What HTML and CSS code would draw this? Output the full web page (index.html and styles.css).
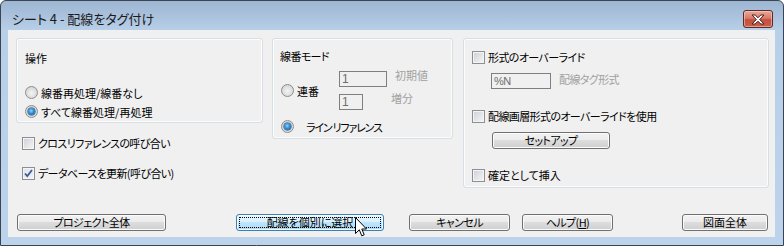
FILE: index.html
```html
<!DOCTYPE html>
<html lang="ja">
<head>
<meta charset="utf-8">
<title>シート 4 - 配線をタグ付け</title>
<link rel="stylesheet" href="styles.css">
</head>
<body>
<div class="window">
  <div class="titlebar">
    <span class="title">シート 4 - 配線をタグ付け</span>
    <div class="close">
      <svg width="16" height="11" viewBox="0 0 16 11"><path d="M2 1h3.2L8 3.8 10.8 1H14l-4.3 4.5L14 10h-3.2L8 7.2 5.2 10H2l4.3-4.5z" fill="#fff" stroke="#4a2420" stroke-width="1" stroke-linejoin="round"/></svg>
    </div>
  </div>
  <div class="client">
    <div class="panels">
      <div class="col-left">
        <div class="group g-op">
          <div class="glabel">操作</div>
          <div class="opt op-first"><span class="rb"></span><span>線番再処理/線番なし</span></div>
          <div class="opt"><span class="rb on"></span><span>すべて線番処理/再処理</span></div>
        </div>
        <div class="chk c-xref"><span class="cb"></span><span class="kana">クロスリファレンスの呼び合い</span></div>
        <div class="chk c-db"><span class="cb on"><svg width="9" height="9" viewBox="0 0 9 9"><path d="M1 4.5l2.3 2.6L8 1" fill="none" stroke="#3c5a9a" stroke-width="1.8"/></svg></span><span class="kana">データベースを更新(呼び合い)</span></div>
      </div>
      <div class="group g-mode">
        <div class="glabel kana">線番モード</div>
        <div class="seq">
          <div class="opt seq-opt"><span class="rb"></span><span>連番</span></div>
          <div class="seq-fields">
            <div class="field-row"><span class="tb tb-start">1</span><span class="dis lbl-start">初期値</span></div>
            <div class="field-row row2"><span class="tb tb-inc">1</span><span class="dis lbl-inc">増分</span></div>
          </div>
        </div>
        <div class="opt line-opt"><span class="rb on"></span><span class="line-text kana">ライン リファレンス</span></div>
      </div>
      <div class="group g-right">
        <div class="chk r1"><span class="cb"></span><span class="kana">形式のオーバーライド</span></div>
        <div class="field-row fmt"><span class="tb tb-fmt">%N</span><span class="dis lbl-fmt kana">配線タグ形式</span></div>
        <div class="chk r2"><span class="cb"></span><span class="kana">配線画層形式のオーバーライドを使用</span></div>
        <div class="btn setup kana">セットアップ</div>
        <div class="chk r3"><span class="cb"></span><span>確定として挿入</span></div>
      </div>
    </div>
    <div class="buttons">
      <div class="btn b1 kana">プロジェクト全体</div>
      <div class="btn b2 focus"><span class="focus-rect">配線を個別に選択</span>
        <svg class="cursor" width="13" height="20" viewBox="0 0 13 20"><path d="M0.5 0.5V16.5L4.3 12.8L6.8 18.8L9.2 17.8L6.8 12H11.5Z" fill="#fff" stroke="#000" stroke-width="1" stroke-linejoin="miter"/></svg>
      </div>
      <div class="btn b3 kana">キャンセル</div>
      <div class="btn b4 kana">ヘルプ(<u>H</u>)</div>
      <div class="btn b5">図面全体</div>
    </div>
  </div>
</div>
</body>
</html>
```
FILE: styles.css
```css
html, body {
  margin: 0;
  padding: 0;
  background: #ffffff;
}
body {
  font-family: "Noto Sans CJK JP", "DejaVu Sans", sans-serif;
  font-size: 11px;
  color: #000;
  font-feature-settings: "palt";
}
.kana {
  letter-spacing: -0.6px;
}
.window {
  box-sizing: border-box;
  width: 784px;
  height: 246px;
  border: 1px solid #3b4450;
  border-radius: 6px 6px 0 0;
  background: linear-gradient(to bottom, #9db6d2 0px, #a9c1dc 14px, #b8cfe8 29px, #bcd3eb 100%);
  display: flex;
  flex-direction: column;
  overflow: hidden;
}
.titlebar {
  height: 29px;
  display: flex;
  align-items: flex-start;
  flex: none;
}
.title {
  margin: 8px 0 0 11px;
  font-size: 13px;
  line-height: 20px;
  color: #1b1b1b;
}
.close {
  margin: 9px 10px 0 auto;
  box-sizing: border-box;
  width: 30px;
  height: 18px;
  border: 1px solid #5d2a26;
  border-radius: 3px;
  background: linear-gradient(to bottom, #e9a99c 0%, #d97a6a 45%, #c4503d 55%, #c8604c 100%);
  box-shadow: inset 0 0 0 1px rgba(255,220,210,0.5);
  display: flex;
  align-items: center;
  justify-content: center;
}
.client {
  margin-left: 7px;
  width: 767px;
  height: 207px;
  box-sizing: border-box;
  background: #f0f0f0;
  padding: 8px 0 0 8px;
  display: flex;
  flex-direction: column;
}
.panels {
  display: flex;
  align-items: flex-start;
  height: 150px;
}
.group {
  box-sizing: border-box;
  border: 1px solid #d5dfe5;
  border-radius: 3px;
  box-shadow: inset 0 0 0 1px #fcfcfc;
}
.col-left {
  width: 247px;
  display: flex;
  flex-direction: column;
}
.g-op {
  height: 85px;
  padding: 11px 0 0 8px;
}
.glabel {
  height: 16px;
  line-height: 16px;
}
.opt {
  display: flex;
  align-items: center;
  height: 19px;
}
.op-first {
  margin-top: 17px;
}
.rb {
  box-sizing: border-box;
  width: 13px;
  height: 13px;
  border-radius: 50%;
  border: 1px solid #8b8d8f;
  background: radial-gradient(circle at 50% 55%, #f4f4f4 0%, #dcdcdc 60%, #c8c8c8 100%);
  margin-right: 3px;
  flex: none;
  display: flex;
  align-items: center;
  justify-content: center;
}
.rb.on::after {
  content: "";
  width: 7px;
  height: 7px;
  border-radius: 50%;
  background: radial-gradient(circle at 45% 40%, #8fd6ff 0%, #2f8ed6 45%, #0d4c8e 100%);
  box-shadow: 0 0 0 0.5px #10365e;
}
.chk {
  display: flex;
  align-items: center;
  height: 20px;
}
.col-left .chk {
  padding-left: 6px;
  margin-top: 10px;
}
.cb {
  box-sizing: border-box;
  width: 13px;
  height: 13px;
  border: 1px solid #8e8f8f;
  background: linear-gradient(135deg, #cbcfd5 0%, #e6e7ea 60%, #f6f6f6 100%);
  box-shadow: inset 0 0 0 1px #f4f4f4;
  margin-right: 3px;
  flex: none;
  display: flex;
  align-items: center;
  justify-content: center;
}
.cb.on {
  background: linear-gradient(135deg, #dfe3ea 0%, #f2f3f5 100%);
}
.g-mode {
  width: 181px;
  height: 101px;
  margin-left: 9px;
  padding: 9px 0 0 8px;
}
.g-mode .glabel {
  margin-left: -1px;
}
.seq {
  display: flex;
  align-items: center;
  margin-top: 7px;
}
.seq-opt {
  width: 58px;
  flex: none;
}
.seq-fields {
  display: flex;
  flex-direction: column;
}
.field-row {
  display: flex;
  align-items: flex-start;
}
.row2 {
  margin-top: 7px;
}
.tb {
  box-sizing: border-box;
  height: 16px;
  border: 1px solid #7f7f7f;
  background: #f0f0f0;
  color: #6d6d6d;
  font-family: "Liberation Sans", Arial, sans-serif;
  font-size: 12px;
  line-height: 14px;
  padding-left: 2px;
  flex: none;
}
.tb-start { width: 48px; }
.tb-inc { width: 24px; }
.tb-fmt { width: 60px; font-size: 11px; letter-spacing: -0.5px; }
.dis {
  color: #a0a0a0;
  line-height: 14px;
  margin-top: -3px;
}
.lbl-start { margin-left: 8px; }
.lbl-inc { margin-left: 28px; }
.lbl-fmt { margin-left: 8px; margin-top: -1px; }
.line-opt {
  margin-top: 7px;
}
.line-text {
  margin-left: 9px;
  letter-spacing: -1.2px;
}
.g-right {
  width: 306px;
  height: 150px;
  margin-left: 10px;
  padding: 8px 0 0 8px;
}
.fmt {
  margin: 6px 0 0 19px;
}
.r2 { margin-top: 17px; }
.r3 { margin-top: 16px; }
.btn {
  box-sizing: border-box;
  height: 17px;
  border: 1px solid #707070;
  border-radius: 3px;
  background: linear-gradient(to bottom, #f2f2f2 0%, #ebebeb 50%, #dddddd 50%, #cfcfcf 100%);
  box-shadow: inset 0 0 0 1px #fbfbfb;
  display: flex;
  align-items: center;
  justify-content: center;
  line-height: 15px;
  flex: none;
}
.setup {
  width: 118px;
  margin: 6px 0 0 20px;
}
.buttons {
  display: flex;
  margin-top: 26px;
}
.b1 { width: 149px; margin-left: 1px; }
.b2 { width: 148px; margin-left: 70px; }
.b3 { width: 101px; margin-left: 25px; }
.b4 { width: 91px; margin-left: 12px; }
.b5 { width: 86px; margin-left: 69px; }
.focus {
  position: relative;
  border-color: #3c7fb1;
  background: linear-gradient(to bottom, #eaf6fd 0%, #d9f0fc 50%, #bee6fd 50%, #a7d9f5 100%);
  box-shadow: inset 0 0 0 1px #f4fbff;
}
.focus-rect {
  box-sizing: border-box;
  position: absolute;
  left: 2px;
  right: 2px;
  top: 2px;
  bottom: 2px;
  border: 1px dotted #000;
  display: flex;
  align-items: center;
  justify-content: center;
  line-height: 11px;
}
.cursor {
  position: absolute;
  left: 118px;
  top: 2px;
}
u {
  text-decoration: underline;
  text-underline-offset: 1px;
}
```
